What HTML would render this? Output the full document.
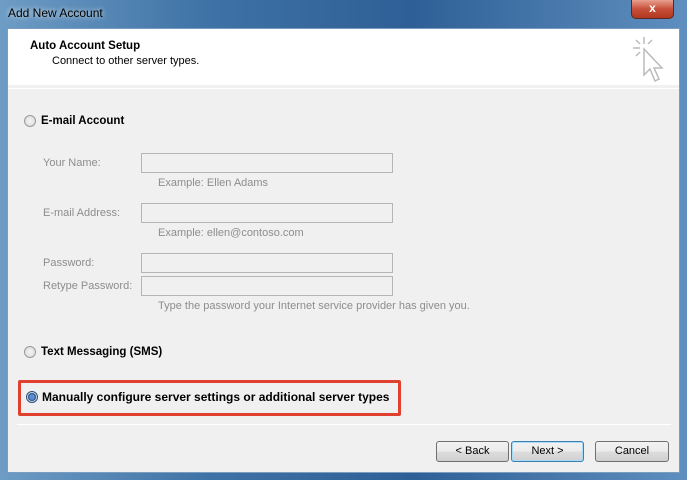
<!DOCTYPE html>
<html><head><meta charset="utf-8"><style>
*{margin:0;padding:0;box-sizing:border-box}
body{width:687px;height:480px;overflow:hidden;position:relative;font-family:"Liberation Sans",sans-serif;font-size:11px;background:linear-gradient(90deg,#6d9cc4,#3f72a6 30%,#2e5f96 60%,#5f8fbf);}
.abs{position:absolute}
.title{left:8px;top:6px;color:#000;font-size:12px;text-shadow:0 0 6px #fff}
.close{left:631px;top:0;width:43px;height:19px;border:1px solid #5a2a20;border-top:none;border-radius:0 0 5px 5px;background:linear-gradient(#e8a090,#c8503a 50%,#b03820);color:#fff;font-weight:bold;text-align:center;font-size:12px;line-height:17px}
.client{left:7px;top:28px;width:673px;height:445px;background:#f0f0f0;border:1px solid #7a9cbf}
.hdr{left:0;top:0;width:671px;height:56px;background:#fff}
.b{font-weight:bold;color:#000}
.sep{height:1px;background:#a0a0a0;border-bottom:1px solid #fff}
.g{color:#8d8d8d}
.fld{width:252px;height:20px;border:1px solid #b5b5b5;background:#f0f0f0}
.radio{width:12px;height:12px;border-radius:50%;border:1px solid #9a9a9a;background:radial-gradient(#f4f4f4,#d8d8d8)}
.btn{height:21px;border:1px solid #707070;border-radius:3px;background:linear-gradient(#f2f2f2,#ebebeb 50%,#dddddd 51%,#cfcfcf);text-align:center;line-height:19px;color:#000;font-size:11px}
</style></head><body>
<div class="abs title">Add New Account</div>
<div class="abs close">x</div>
<div class="abs client">
 <div class="abs hdr">
  <div class="abs b" style="left:22px;top:11px;font-size:11.5px">Auto Account Setup</div>
  <div class="abs" style="left:44px;top:26px">Connect to other server types.</div>
  <svg class="abs" style="left:622px;top:6px" width="36" height="50" viewBox="0 0 36 50">
   <g stroke="#bbb" stroke-width="1.5" fill="none">
    <line x1="14" y1="2" x2="14" y2="9"/><line x1="3" y1="13" x2="10" y2="13"/><line x1="6" y1="5" x2="10" y2="9"/><line x1="22" y1="5" x2="18" y2="9"/><line x1="6" y1="21" x2="10" y2="17"/>
    <path d="M14 14 L14 40 L20 34 L25 46 L29 44 L24 33 L32 33 Z" fill="#fff"/>
   </g>
  </svg>
 </div>
 <div class="abs sep" style="left:0;top:59px;width:671px"></div>
 <div class="abs radio" style="left:16px;top:86px"></div>
 <div class="abs b" style="left:33px;top:86px;font-size:11.5px">E-mail Account</div>
 <div class="abs g" style="left:35px;top:128px">Your Name:</div>
 <div class="abs fld" style="left:133px;top:124px"></div>
 <div class="abs g" style="left:150px;top:148px">Example: Ellen Adams</div>
 <div class="abs g" style="left:35px;top:178px">E-mail Address:</div>
 <div class="abs fld" style="left:133px;top:174px"></div>
 <div class="abs g" style="left:150px;top:198px">Example: ellen@contoso.com</div>
 <div class="abs g" style="left:35px;top:228px">Password:</div>
 <div class="abs fld" style="left:133px;top:224px"></div>
 <div class="abs g" style="left:35px;top:251px">Retype Password:</div>
 <div class="abs fld" style="left:133px;top:247px"></div>
 <div class="abs g" style="left:150px;top:271px">Type the password your Internet service provider has given you.</div>
 <div class="abs radio" style="left:16px;top:317px"></div>
 <div class="abs b" style="left:33px;top:317px;font-size:11.5px">Text Messaging (SMS)</div>
 <div class="abs" style="left:10px;top:351px;width:383px;height:36px;border:3px solid #e0402e;border-radius:2px"></div>
 <div class="abs radio" style="left:18px;top:362px;border-color:#2c4f7a;background:radial-gradient(#5a8fd0 0 2.5px,#1a3f78 3.5px,#dfe8f3 4.5px)"></div>
 <div class="abs b" style="left:34px;top:361px;font-size:12px">Manually configure server settings or additional server types</div>
 <div class="abs sep" style="left:9px;top:395px;width:654px"></div>
 <div class="abs btn" style="left:428px;top:412px;width:73px">&lt; Back</div>
 <div class="abs btn" style="left:503px;top:412px;width:73px;border-color:#3c7fb1;box-shadow:inset 0 0 0 1px #a8dcf8">Next &gt;</div>
 <div class="abs btn" style="left:587px;top:412px;width:74px">Cancel</div>
</div>
</body></html>
